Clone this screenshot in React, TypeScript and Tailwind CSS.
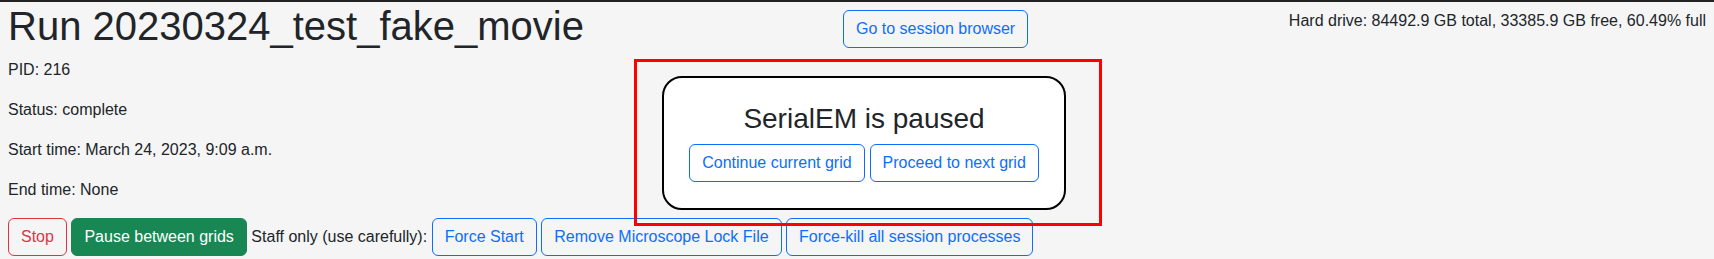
import React from 'react'

const font = { fontFamily: '"Liberation Sans", Arial, Helvetica, sans-serif' }

function OutlineBtn({ children, tone = 'primary' }: { children: React.ReactNode; tone?: 'primary' | 'danger' }) {
  const toneCls =
    tone === 'danger'
      ? 'border-[#dc3545] text-[#dc3545]'
      : 'border-[#0d6efd] text-[#0d6efd]'
  return (
    <button
      className={`shrink-0 whitespace-nowrap rounded-[6px] border bg-transparent px-[12px] py-[6px] text-[16px] leading-[24px] ${toneCls}`}
    >
      {children}
    </button>
  )
}

export default function App() {
  return (
    <div style={font} className="relative h-screen w-full overflow-hidden border-t-2 border-[#222] bg-[#f5f5f5] text-[#212529]">
      <div className="px-[8px]">
        <div className="flex items-start">
          {/* run info */}
          <div className="w-[575px] shrink-0">
            <h1 className="mb-[8px] whitespace-nowrap text-[40px] leading-[48px]">Run 20230324_test_fake_movie</h1>
            <p className="mb-[16px] text-[16px] leading-[24px]">PID: 216</p>
            <p className="mb-[16px] text-[16px] leading-[24px]">Status: complete</p>
            <p className="mb-[16px] text-[16px] leading-[24px]">Start time: March 24, 2023, 9:09 a.m.</p>
            <p className="mb-[16px] text-[16px] leading-[24px]">End time: None</p>
          </div>

          {/* session controls */}
          <div className="w-[540px] shrink-0">
            <div className="ml-[260px] mt-[8px]">
              <OutlineBtn>Go to session browser</OutlineBtn>
            </div>
            <div className="ml-[79px] mt-[28px] w-[404px] rounded-[20px] border-2 border-black bg-white pb-[26px] pt-[24px] text-center">
              <h3 className="mb-[8px] text-[28px] leading-[33.6px]">SerialEM is paused</h3>
              <div className="flex justify-center gap-[5px]">
                <OutlineBtn>Continue current grid</OutlineBtn>
                <OutlineBtn>Proceed to next grid</OutlineBtn>
              </div>
            </div>
          </div>

          {/* disk usage */}
          <div className="mt-[7px] flex-1 whitespace-nowrap text-right text-[16px] leading-[24px]">
            Hard drive: 84492.9 GB total, 33385.9 GB free, 60.49% full
          </div>
        </div>

        <div className="flex items-center gap-[4.5px]">
          <OutlineBtn tone="danger">Stop</OutlineBtn>
          <button className="shrink-0 whitespace-nowrap rounded-[6px] border border-[#198754] bg-[#198754] px-[12px] py-[6px] text-[16px] leading-[24px] text-white">
            Pause between grids
          </button>
          <span className="whitespace-nowrap text-[16px] leading-[24px]">Staff only (use carefully):</span>
          <OutlineBtn>Force Start</OutlineBtn>
          <OutlineBtn>Remove Microscope Lock File</OutlineBtn>
          <OutlineBtn>Force-kill all session processes</OutlineBtn>
        </div>
      </div>

      {/* annotation frame */}
      <div className="pointer-events-none absolute left-[634px] top-[57px] h-[167px] w-[468px] border-[3px] border-[#ff0000]" />
    </div>
  )
}
